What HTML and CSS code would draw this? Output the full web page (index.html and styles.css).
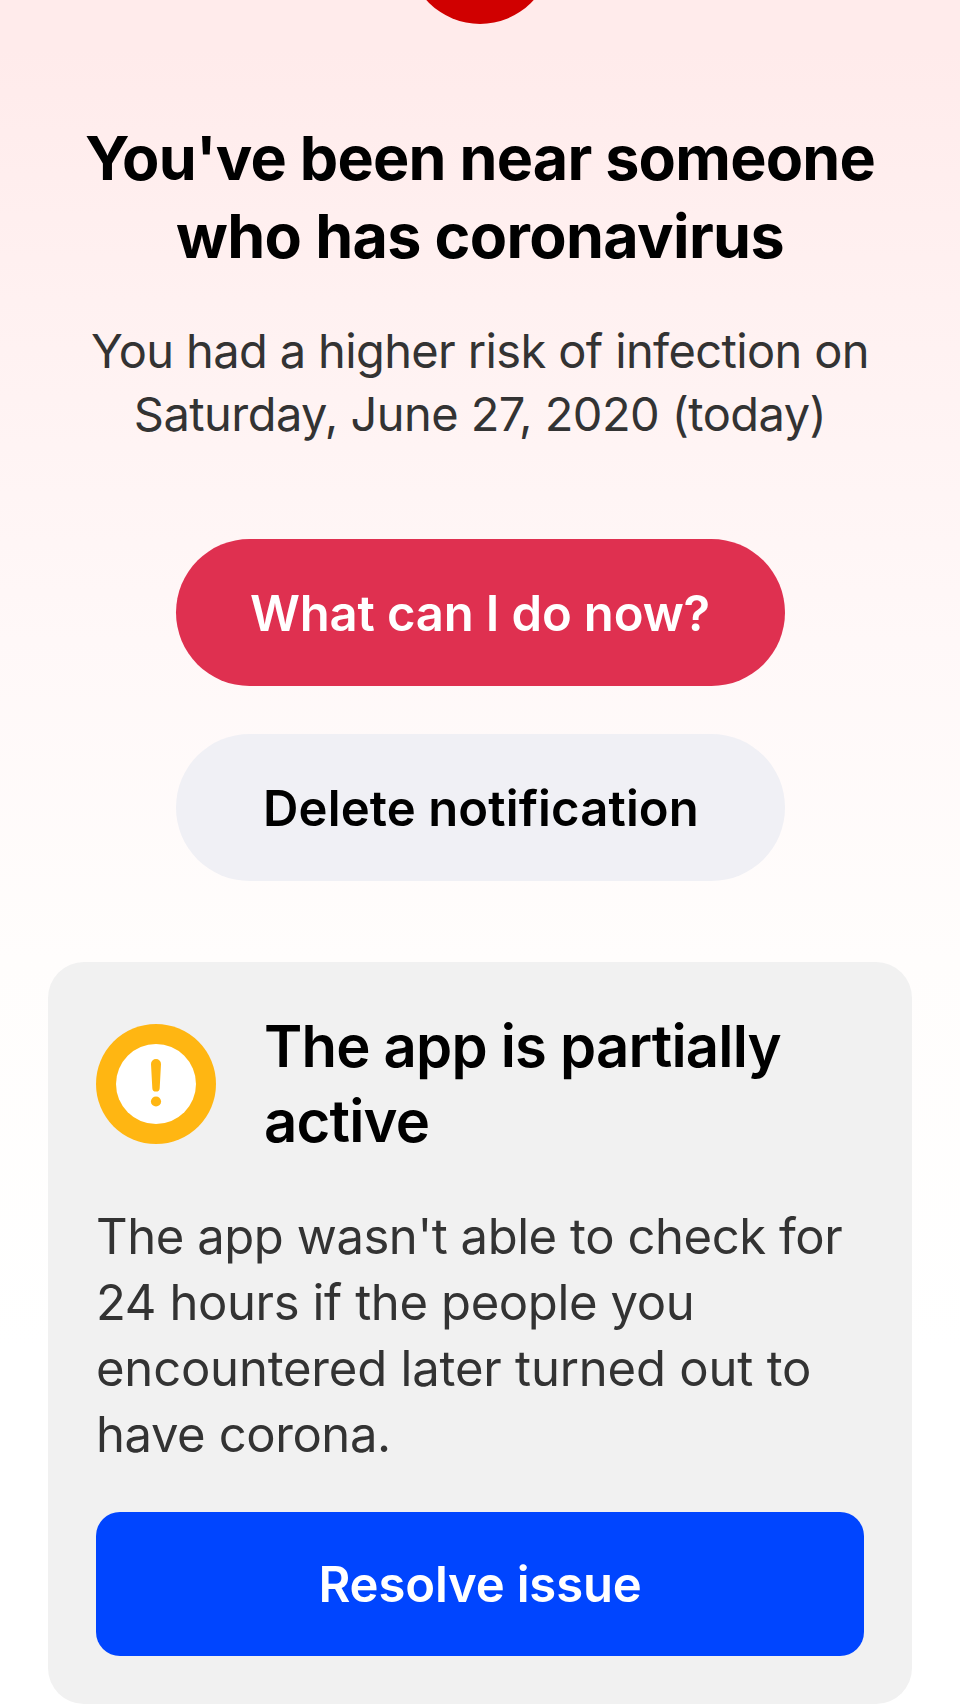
FILE: index.html
```html
<!DOCTYPE html>
<html lang="en">
<head>
<meta charset="utf-8">
<meta name="viewport" content="width=device-width">
<title>Exposure notification</title>
<link rel="stylesheet" href="styles.css">
</head>
<body>
<main class="screen">
  <div class="badge-clip"><div class="badge"></div></div>
  <section class="alert">
    <h1 class="alert-title"><span class="line t1">You've been near someone</span><span class="line t2">who has coronavirus</span></h1>
    <p class="alert-text"><span class="line p1">You had a higher risk of infection on</span><span class="line p2">Saturday, June 27, 2020 (today)</span></p>
    <div class="actions">
      <button class="pill pill-primary" type="button">What can I do now?</button>
      <button class="pill pill-secondary" type="button">Delete notification</button>
    </div>
  </section>
  <section class="card">
    <header class="card-head">
      <svg class="card-icon" viewBox="0 0 120 120" aria-hidden="true">
        <circle cx="60" cy="60" r="60" fill="#ffb612"/>
        <circle cx="60" cy="60" r="40" fill="#fff"/>
        <path d="M55 40a5 5 0 0 1 10 0L63.700 63.900a3.700 3.700 0 0 1-7.400 0z" fill="#ffb612"/>
        <circle cx="60" cy="77.500" r="5.100" fill="#ffb612"/>
      </svg>
      <h2 class="card-title"><span class="line">The app is partially</span><span class="line">active</span></h2>
    </header>
    <p class="card-text"><span class="line c1">The app wasn't able to check for</span><span class="line c2">24 hours if the people you</span><span class="line c3">encountered later turned out to</span><span class="line c4">have corona.</span></p>
    <button class="resolve" type="button">Resolve issue</button>
  </section>
</main>
</body>
</html>
```
FILE: styles.css
```css
* { box-sizing: border-box; }

body {
  margin: 0;
  background: #fff;
  font-family: Inter, "Liberation Sans", sans-serif;
}

h1, h2, p { margin: 0; }

button {
  border: 0;
  padding: 0;
  font: inherit;
}

.screen {
  display: flex;
  flex-direction: column;
  width: 960px;
  height: 1704px;
  overflow: hidden;
  background: linear-gradient(#ffebeb 0, #ffebeb 50px, #fff1f1 300px, #fff8f8 640px, #fffdfc 960px, #fff 1350px);
}

.badge-clip {
  display: flex;
  flex: none;
  align-items: flex-end;
  justify-content: center;
  height: 24px;
  overflow: hidden;
}

.badge {
  flex: none;
  width: 144px;
  height: 144px;
  border-radius: 50%;
  background: #d00000;
}

.line {
  display: block;
  white-space: nowrap;
}

.alert {
  padding-top: 95px;
  text-align: center;
}

.alert-title {
  font-size: 61px;
  font-weight: 700;
  line-height: 78px;
  color: #000;
}

.t1 { letter-spacing: -0.77px; }
.t2 { letter-spacing: -0.65px; }

.alert-text {
  margin-top: 44px;
  font-size: 47px;
  line-height: 63px;
  color: #333;
}

.p1 { letter-spacing: -0.63px; }
.p2 { letter-spacing: -0.552px; }

.actions {
  display: flex;
  flex-direction: column;
  align-items: center;
  gap: 48px;
  margin-top: 94px;
}

.pill {
  width: 609px;
  height: 147px;
  padding-top: 2px;
  border-radius: 74px;
  font-size: 49px;
  font-weight: 600;
}

.pill-primary {
  background: #df3050;
  color: #fff;
  letter-spacing: -0.14px;
}

.pill-secondary {
  padding-left: 2px;
  background: #f0f0f5;
  color: #000;
  letter-spacing: 0.12px;
}

.card {
  flex: none;
  height: 742px;
  margin: 81px 48px 0;
  padding: 47px 48px 48px;
  border-radius: 36px;
  background: #f1f1f1;
}

.card-head {
  display: flex;
  align-items: center;
  gap: 48px;
}

.card-icon {
  flex: none;
  width: 120px;
  height: 120px;
}

.card-title {
  font-size: 58px;
  font-weight: 600;
  line-height: 75px;
  letter-spacing: -0.79px;
  color: #000;
}

.card-text {
  margin-top: 45px;
  font-size: 49px;
  line-height: 66px;
  color: #333;
}

.c1 { letter-spacing: -0.442px; }
.c2 { letter-spacing: -0.38px; }
.c3 { letter-spacing: -0.196px; }
.c4 { letter-spacing: -0.414px; }

.resolve {
  display: block;
  width: 100%;
  height: 144px;
  margin-top: 44px;
  border-radius: 24px;
  background: #0045ff;
  color: #fff;
  font-size: 49px;
  font-weight: 600;
  letter-spacing: -0.15px;
}
```
